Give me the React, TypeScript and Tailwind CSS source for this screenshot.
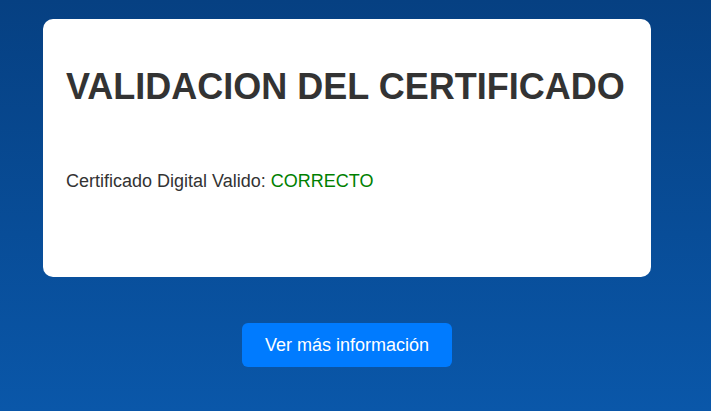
export default function App() {
  return (
    <div
      className="w-full h-[411px] bg-gradient-to-b from-[#064082] to-[#0a57a9] overflow-hidden"
      style={{ fontFamily: '"Liberation Sans", Arial, sans-serif' }}
    >
      <div className="ml-[43px] w-[608px] flex flex-col items-center pt-[19px]">
        <div className="w-full h-[258px] bg-white rounded-[10px] px-[23px] pt-[47px]">
          <h1 className="text-[36px] leading-[41px] font-bold text-[#333333] m-0">
            VALIDACION DEL CERTIFICADO
          </h1>
          <p className="mt-[64px] text-[18px] leading-[21px] text-[#333333]">
            Certificado Digital Valido: <span className="text-[#008000]">CORRECTO</span>
          </p>
        </div>
        <button className="mt-[46px] h-[44px] w-[210px] bg-[#007bff] text-white text-[18px] rounded-[6px]">
          Ver más información
        </button>
      </div>
    </div>
  );
}
